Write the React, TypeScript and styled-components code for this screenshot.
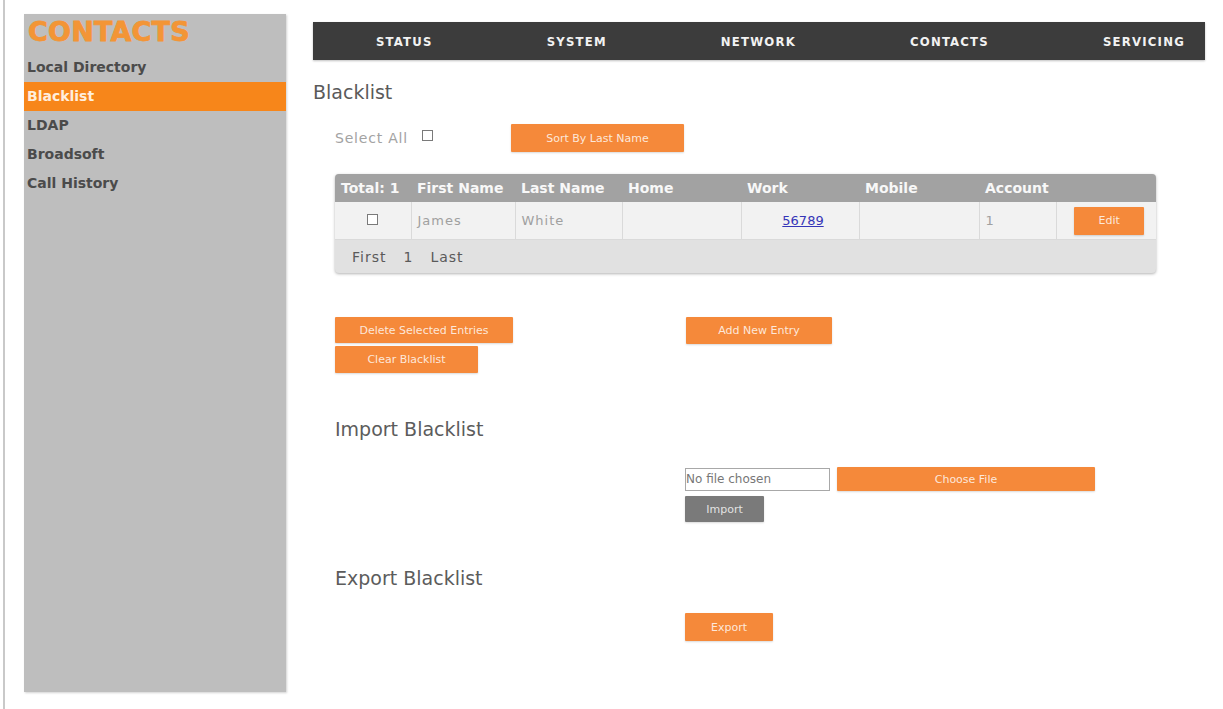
import styled, { createGlobalStyle } from "styled-components";

const GlobalStyle = createGlobalStyle`
  html, body {
    margin: 0;
    padding: 0;
    background: #fff;
    font-family: "DejaVu Sans", Verdana, sans-serif;
  }
`;

const Frame = styled.div`
  display: flex;
  align-items: flex-start;
  min-height: 709px;
  box-sizing: border-box;
  margin-left: 3px;
  padding: 14px 0 0 19px;
  border-left: 2px solid #c9c9c9;
`;

const Sidebar = styled.aside`
  width: 262px;
  height: 678px;
  flex-shrink: 0;
  background: #bebebe;
  box-shadow: 1px 1px 2px rgba(0, 0, 0, 0.18);
`;

const SideTitle = styled.div`
  height: 39px;
  box-sizing: border-box;
  padding: 2px 0 0 4px;
  font-size: 27px;
  font-weight: bold;
  color: #f39536;
  -webkit-text-stroke: 0.8px #f39536;
  letter-spacing: 0.2px;
`;

const SideItem = styled.div<{ $active?: boolean }>`
  height: 29px;
  line-height: 29px;
  padding-left: 3px;
  font-size: 14px;
  font-weight: bold;
  color: ${(p) => (p.$active ? "#ffeedd" : "#4b4b4b")};
  background: ${(p) => (p.$active ? "#f7861a" : "transparent")};
`;

const Main = styled.main`
  width: 892px;
  margin-left: 27px;
  padding-top: 8px;
`;

const NavBar = styled.nav`
  height: 38px;
  display: flex;
  align-items: center;
  justify-content: space-between;
  padding: 0 20px 0 63px;
  background: #3c3c3c;
  box-shadow: 0 1px 2px rgba(0, 0, 0, 0.25);
`;

const NavItem = styled.span`
  font-family: "DejaVu Sans Condensed", "DejaVu Sans", sans-serif;
  font-size: 13px;
  font-weight: bold;
  letter-spacing: 1.2px;
  color: #f2f2f2;
`;

const PageTitle = styled.h1`
  margin: 21px 0 0;
  font-size: 19px;
  font-weight: normal;
  color: #5a5a5a;
  line-height: 22px;
`;

const Content = styled.div`
  padding-left: 22px;
`;

const SelectRow = styled.div`
  display: flex;
  align-items: center;
  margin-top: 21px;
  height: 28px;
`;

const SelectLabel = styled.label`
  width: 176px;
  display: flex;
  align-items: flex-start;
  gap: 14px;
  font-size: 14px;
  color: #a3a3a3;
  letter-spacing: 0.8px;
`;

const Check = styled.input.attrs({ type: "checkbox" })`
  appearance: none;
  margin: 0;
  width: 11px;
  height: 11px;
  border: 1px solid #7a7a7a;
  background: #fff;
`;

const OrangeButton = styled.button<{ $w: number; $h?: number }>`
  width: ${(p) => p.$w}px;
  height: ${(p) => p.$h ?? 27}px;
  padding: 0;
  border: none;
  border-radius: 1px;
  background: #f5893a;
  color: rgba(255, 255, 255, 0.82);
  font-family: "DejaVu Sans", sans-serif;
  font-size: 11px;
  box-shadow: 0 1px 2px rgba(0, 0, 0, 0.15);
`;

const GrayButton = styled(OrangeButton)`
  background: #7a7a7a;
  color: rgba(255, 255, 255, 0.8);
`;

const TableWrap = styled.div`
  margin-top: 22px;
  width: 821px;
  border-radius: 4px;
  overflow: hidden;
  background: #e1e1e1;
  box-shadow: 0 1px 3px rgba(0, 0, 0, 0.3);
`;

const Table = styled.table`
  width: 100%;
  border-collapse: collapse;
  table-layout: fixed;
`;

const Th = styled.th`
  height: 28px;
  padding: 0 0 0 6px;
  text-align: left;
  background: #a2a2a2;
  color: #f8f8f8;
  font-size: 14px;
  font-weight: bold;
  white-space: nowrap;
  overflow: hidden;
`;

const Td = styled.td<{ $center?: boolean }>`
  height: 37px;
  padding: 0 0 0 6px;
  background: #f2f2f2;
  border-left: 1px solid #dadada;
  border-bottom: 1px solid #dadada;
  text-align: ${(p) => (p.$center ? "center" : "left")};
  font-size: 13px;
  color: #a0a0a0;
  letter-spacing: 1px;
  &:first-child {
    border-left: none;
    padding: 0;
  }
`;

const PhoneLink = styled.a`
  color: #3535b8;
  text-decoration: underline;
  letter-spacing: 0;
`;

const Pager = styled.div`
  height: 33px;
  display: flex;
  align-items: center;
  gap: 17px;
  padding-left: 17px;
  font-size: 14px;
  color: #5a5a5a;
  letter-spacing: 1px;
`;

const ActionArea = styled.div`
  display: flex;
  margin-top: 44px;
`;

const ActionColumn = styled.div`
  width: 351px;
  display: flex;
  flex-direction: column;
  align-items: flex-start;
  gap: 3px;
`;

const SectionTitle = styled.h2`
  margin: 45px 0 0;
  font-size: 19px;
  font-weight: normal;
  color: #5c5c5c;
  line-height: 22px;
`;

const Indented = styled.div`
  padding-left: 350px;
  display: flex;
  flex-direction: column;
  align-items: flex-start;
`;

const FileRow = styled.div`
  display: flex;
  align-items: center;
  gap: 7px;
  margin-top: 27px;
  margin-bottom: 5px;
`;

const FileName = styled.div`
  width: 143px;
  height: 21px;
  line-height: 21px;
  border: 1px solid #a8a8a8;
  font-size: 12px;
  color: #777;
  white-space: nowrap;
`;

const columns = [
  { label: "Total: 1", width: 76 },
  { label: "First Name", width: 104 },
  { label: "Last Name", width: 107 },
  { label: "Home", width: 119 },
  { label: "Work", width: 118 },
  { label: "Mobile", width: 120 },
  { label: "Account", width: 77 },
  { label: "", width: 100 },
];

export default function App() {
  return (
    <>
      <GlobalStyle />
      <Frame>
        <Sidebar>
          <SideTitle>CONTACTS</SideTitle>
          <SideItem>Local Directory</SideItem>
          <SideItem $active>Blacklist</SideItem>
          <SideItem>LDAP</SideItem>
          <SideItem>Broadsoft</SideItem>
          <SideItem>Call History</SideItem>
        </Sidebar>

        <Main>
          <NavBar>
            <NavItem>STATUS</NavItem>
            <NavItem>SYSTEM</NavItem>
            <NavItem>NETWORK</NavItem>
            <NavItem>CONTACTS</NavItem>
            <NavItem>SERVICING</NavItem>
          </NavBar>

          <PageTitle>Blacklist</PageTitle>

          <Content>
            <SelectRow>
              <SelectLabel>
                Select All <Check />
              </SelectLabel>
              <OrangeButton $w={173} $h={28}>
                Sort By Last Name
              </OrangeButton>
            </SelectRow>

            <TableWrap>
              <Table>
                <colgroup>
                  {columns.map((c, i) => (
                    <col key={i} style={{ width: c.width }} />
                  ))}
                </colgroup>
                <thead>
                  <tr>
                    {columns.map((c, i) => (
                      <Th key={i}>{c.label}</Th>
                    ))}
                  </tr>
                </thead>
                <tbody>
                  <tr>
                    <Td $center>
                      <Check />
                    </Td>
                    <Td>James</Td>
                    <Td>White</Td>
                    <Td />
                    <Td $center>
                      <PhoneLink href="#">56789</PhoneLink>
                    </Td>
                    <Td />
                    <Td>1</Td>
                    <Td $center>
                      <OrangeButton $w={70} $h={28}>
                        Edit
                      </OrangeButton>
                    </Td>
                  </tr>
                </tbody>
              </Table>
              <Pager>
                <span>First</span>
                <span>1</span>
                <span>Last</span>
              </Pager>
            </TableWrap>

            <ActionArea>
              <ActionColumn>
                <OrangeButton $w={178} $h={26}>
                  Delete Selected Entries
                </OrangeButton>
                <OrangeButton $w={143} $h={27}>
                  Clear Blacklist
                </OrangeButton>
              </ActionColumn>
              <OrangeButton $w={146} $h={27}>
                Add New Entry
              </OrangeButton>
            </ActionArea>

            <SectionTitle>Import Blacklist</SectionTitle>
            <Indented>
              <FileRow>
                <FileName>No file chosen</FileName>
                <OrangeButton $w={258} $h={24}>
                  Choose File
                </OrangeButton>
              </FileRow>
              <GrayButton $w={79} $h={26}>
                Import
              </GrayButton>
            </Indented>

            <SectionTitle>Export Blacklist</SectionTitle>
            <Indented>
              <OrangeButton $w={88} $h={28} style={{ marginTop: 24 }}>
                Export
              </OrangeButton>
            </Indented>
          </Content>
        </Main>
      </Frame>
    </>
  );
}
